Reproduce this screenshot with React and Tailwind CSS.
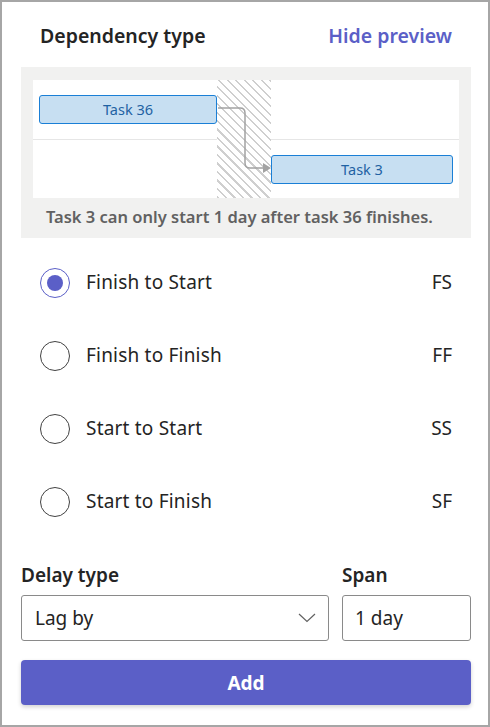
import React, { useState } from "react";

const options = [
  { label: "Finish to Start", code: "FS" },
  { label: "Finish to Finish", code: "FF" },
  { label: "Start to Start", code: "SS" },
  { label: "Start to Finish", code: "SF" },
];

const TaskBar = ({ children }) => (
  <div className="h-[29px] w-full rounded-[3px] border border-[#1a7fd6] bg-[#c7dff2] flex items-center justify-center text-[14.5px] text-[#1f62a3]">
    {children}
  </div>
);

const Preview = () => (
  <div className="bg-[#f1f1f0] px-3 pt-[13px] pb-[9px]">
    <div className="relative bg-white grid grid-cols-[184px_54px_1fr] grid-rows-[60px_58px]">
      <div className="border-b border-[#e6e6e6] pl-[6px] pt-[15px]">
        <TaskBar>Task 36</TaskBar>
      </div>
      <div className="row-span-2 bg-[repeating-linear-gradient(45deg,#cfcfcf_0,#cfcfcf_1.5px,#ffffff_1.5px,#ffffff_6px)]" />
      <div className="border-b border-[#e6e6e6]" />
      <div />
      <div className="pr-[6px] pt-[15px]">
        <TaskBar>Task 3</TaskBar>
      </div>
      <svg className="absolute inset-0 pointer-events-none" width="424" height="118" viewBox="0 0 424 118">
        <path d="M185 28 H207 Q212 28 212 33 V83 Q212 88 217 88 H231" fill="none" stroke="#a3a3a3" strokeWidth="1.5" />
        <path d="M230 83 L238 88 L230 93 Z" fill="#a3a3a3" />
      </svg>
    </div>
    <p className="mt-[7px] pl-[13px] text-[16.5px] leading-[24px] font-semibold text-[#616161]">
      Task 3 can only start 1 day after task 36 finishes.
    </p>
  </div>
);

export default function App() {
  const [selected, setSelected] = useState("FS");

  return (
    <div className="w-[490px] h-[727px] border-2 border-[#a6a6a6] bg-white text-[#242424] font-['Noto_Sans',sans-serif] flex flex-col">
      <div className="pl-[19px] pr-[17px] flex flex-col flex-1">
        <div className="flex items-center justify-between px-[19px] h-[65px] pt-[3px]">
          <h1 className="text-[19.5px] font-semibold">Dependency type</h1>
          <button className="text-[19.5px] font-semibold text-[#5b5fc7]">Hide preview</button>
        </div>

        <Preview />

        <div className="flex flex-col pt-[8px]">
          {options.map((o) => {
            const on = selected === o.code;
            return (
              <label
                key={o.code}
                onClick={() => setSelected(o.code)}
                className="h-[73px] flex items-center px-[19px] cursor-pointer"
              >
                <span
                  className={
                    on
                      ? "w-[30px] h-[30px] rounded-full border border-[#5b5fc7] flex items-center justify-center"
                      : "w-[30px] h-[30px] rounded-full border border-[#424242]"
                  }
                >
                  {on && <span className="w-4 h-4 rounded-full bg-[#5b5fc7]" />}
                </span>
                <span className="ml-[16px] flex-1 text-[19px] tracking-[0.2px]">{o.label}</span>
                <span className="text-[19px]">{o.code}</span>
              </label>
            );
          })}
        </div>

        <div className="flex gap-[13px] mt-[24px]">
          <div className="flex-1 flex flex-col">
            <span className="text-[19px] font-semibold leading-[26px]">Delay type</span>
            <div className="mt-[7px] h-[46px] rounded-[3px] border border-[#8a8a8a] flex items-center justify-between pl-[13px] pr-[12px]">
              <span className="text-[19px]">Lag by</span>
              <svg width="18" height="10" viewBox="0 0 18 10">
                <path d="M1 1 L9 8.5 L17 1" fill="none" stroke="#616161" strokeWidth="1.2" />
              </svg>
            </div>
          </div>
          <div className="w-[129px] flex flex-col">
            <span className="text-[19px] font-semibold leading-[26px]">Span</span>
            <div className="mt-[7px] h-[46px] rounded-[3px] border border-[#8a8a8a] flex items-center pl-[12px]">
              <span className="text-[19px]">1 day</span>
            </div>
          </div>
        </div>

        <button className="mt-[19px] h-[45px] w-full rounded-[4px] bg-[#5b5fc7] text-white text-[19px] font-bold pt-[2px] shadow-[0_2px_4px_rgba(0,0,0,0.18)]">
          Add
        </button>
      </div>
    </div>
  );
}
